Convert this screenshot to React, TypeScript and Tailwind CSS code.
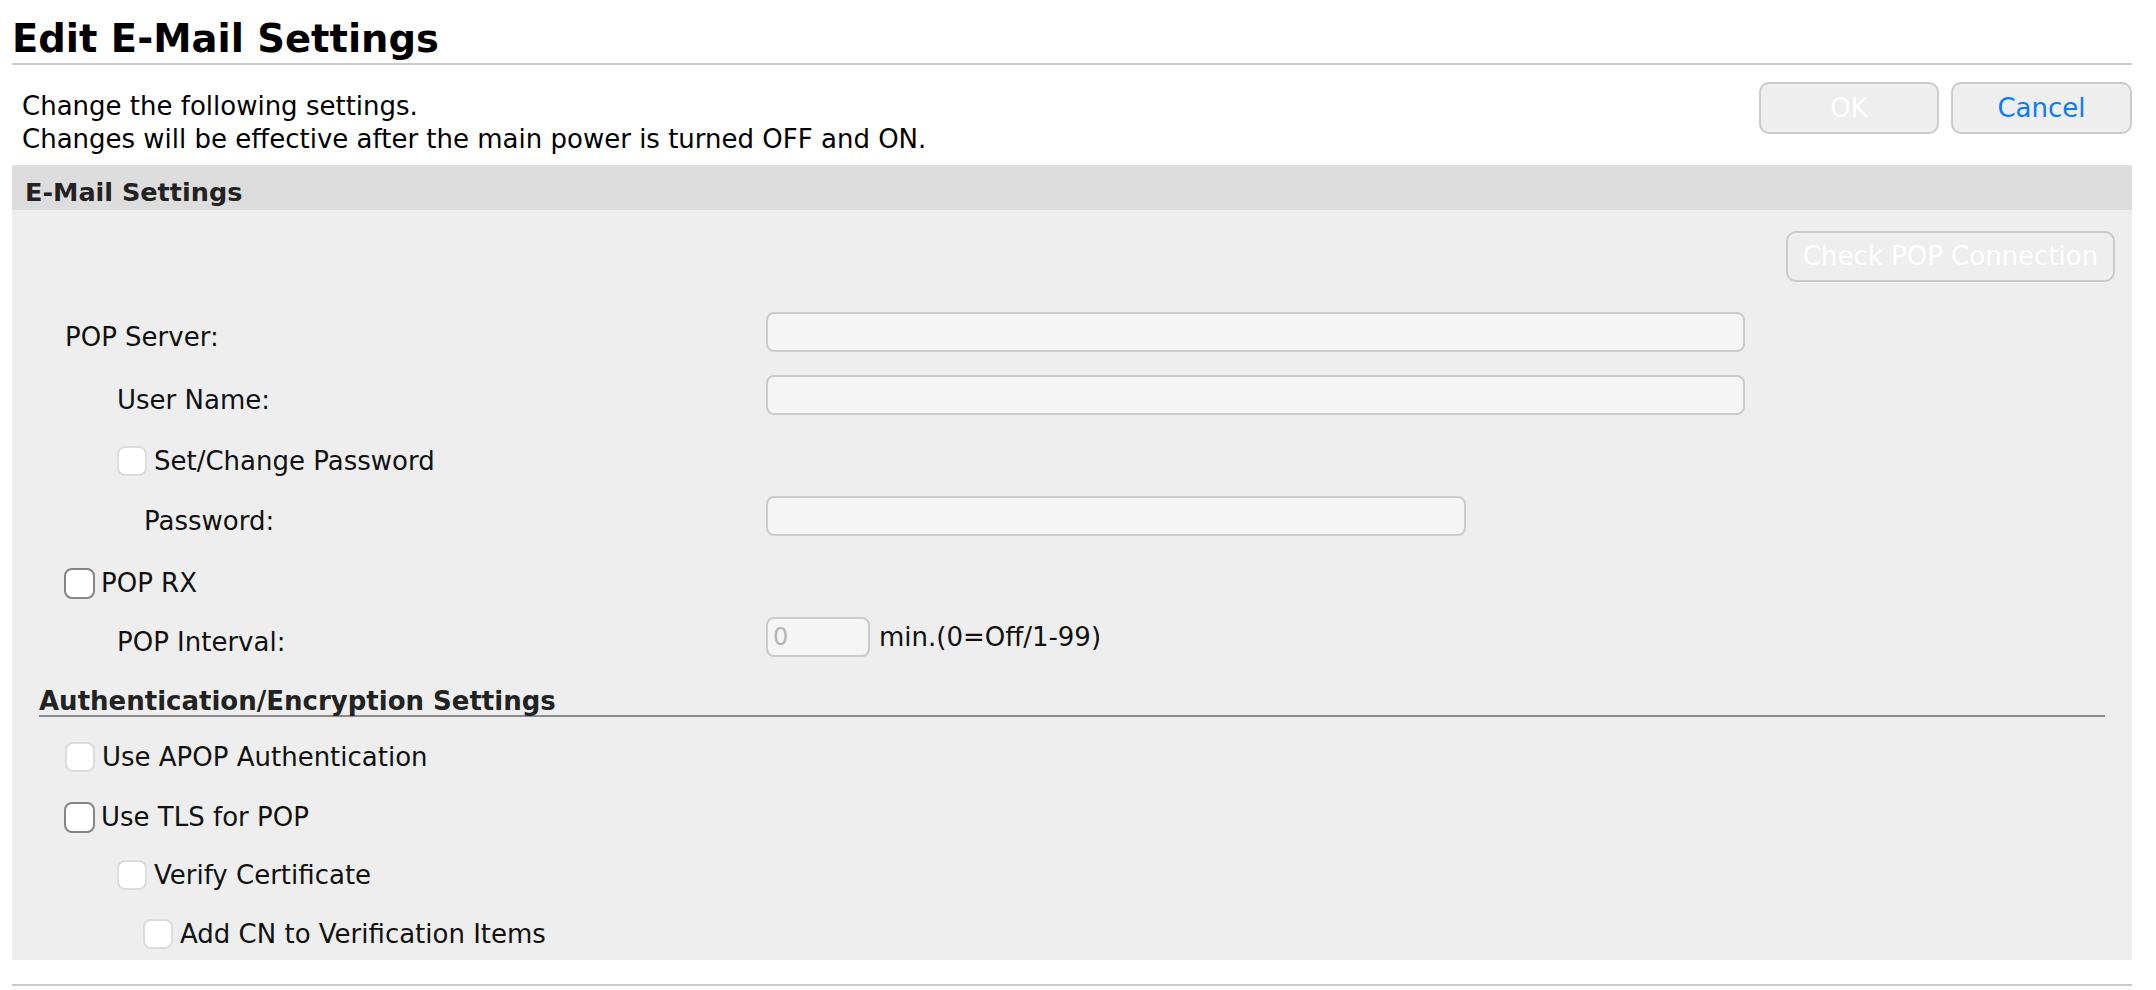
import React from "react";

function Box({ dark }: { dark?: boolean }) {
  return (
    <span
      className={
        dark
          ? "block w-[31px] h-[31px] shrink-0 rounded-[8px] border-2 border-[#858585] bg-white"
          : "block w-[30px] h-[30px] shrink-0 rounded-[8px] border-2 border-[#dcdcdc] bg-white"
      }
    />
  );
}

function CheckRow({ indent, dark, label, mt }: { indent: string; dark?: boolean; label: string; mt: string }) {
  return (
    <div className={`flex items-center h-[40px] ${mt} ${indent}`}>
      <Box dark={dark} />
      <span className={dark ? "ml-[6px]" : "ml-[7px]"}>{label}</span>
    </div>
  );
}

function FieldRow({
  label,
  labelPad,
  inputW,
  mt,
}: {
  label: string;
  labelPad: string;
  inputW: string;
  mt: string;
}) {
  return (
    <div className={`flex items-center h-[40px] ${mt}`}>
      <div className={`w-[754px] shrink-0 pt-[11px] ${labelPad}`}>{label}</div>
      <div className={`h-[40px] ${inputW} rounded-[8px] border-2 border-[#cbcbcb] bg-[#f5f5f5]`} />
    </div>
  );
}

export default function App() {
  return (
    <div className="w-[2156px] h-[990px] bg-white text-black font-['DejaVu_Sans',sans-serif] pl-[12px] pr-[24px] overflow-hidden">
      <h1 className="pt-[16px] h-[65px] text-[38.5px] leading-[46px] font-bold border-b-2 border-[#cccccc]">
        Edit E-Mail Settings
      </h1>

      <div className="mt-[17px] flex justify-between items-start h-[72px]">
        <div className="pt-[8px] pl-[10px] text-[26px] leading-[33px]">
          <div>Change the following settings.</div>
          <div>Changes will be effective after the main power is turned OFF and ON.</div>
        </div>
        <div className="flex gap-[12px]">
          <button className="w-[180px] h-[52px] rounded-[10px] border-2 border-[#cbcbcb] bg-[#eeeeee] text-white text-[26px]">
            OK
          </button>
          <button className="w-[181px] h-[52px] rounded-[10px] border-2 border-[#cbcbcb] bg-[#eeeeee] text-[#0a7bff] text-[26px]">
            Cancel
          </button>
        </div>
      </div>

      <div className="mt-[11px]">
        <div className="h-[45px] bg-[#dddddd] flex items-center pt-[9px] pl-[13px] text-[25.5px] font-bold text-[#222222]">
          E-Mail Settings
        </div>
        <div className="bg-[#eeeeee] h-[750px] text-[26px] text-[#111111]">
          <div className="flex justify-end pt-[21px] pr-[17px]">
            <button className="w-[329px] h-[51px] rounded-[10px] border-2 border-[#cbcbcb] bg-[#eeeeee] text-white text-[26px]">
              Check POP Connection
            </button>
          </div>

          <FieldRow label="POP Server:" labelPad="pl-[53px]" inputW="w-[979px]" mt="mt-[30px]" />
          <FieldRow label="User Name:" labelPad="pl-[105px]" inputW="w-[979px]" mt="mt-[23px]" />
          <CheckRow indent="pl-[105px]" label="Set/Change Password" mt="mt-[26px]" />
          <FieldRow label="Password:" labelPad="pl-[132px]" inputW="w-[700px]" mt="mt-[15px]" />
          <CheckRow indent="pl-[52px]" dark label="POP RX" mt="mt-[27px]" />
          <div className="flex items-center h-[40px] mt-[14px]">
            <div className="w-[754px] shrink-0 pl-[105px] pt-[11px]">POP Interval:</div>
            <div className="h-[40px] w-[104px] rounded-[8px] border-2 border-[#cbcbcb] bg-[#f5f5f5] flex items-center pl-[5px] text-[24px] text-[#b5b5b5]">
              0
            </div>
            <span className="ml-[9px]">min.(0=Off/1-99)</span>
          </div>

          <div className="mt-[25px] mx-[27px] h-[35px] pt-[5px] leading-[28px] border-b-2 border-[#8a8a8a] text-[26px] font-bold text-[#222222]">
            Authentication/Encryption Settings
          </div>

          <CheckRow indent="pl-[53px]" label="Use APOP Authentication" mt="mt-[20px]" />
          <CheckRow indent="pl-[52px]" dark label="Use TLS for POP" mt="mt-[20px]" />
          <CheckRow indent="pl-[105px]" label="Verify Certificate" mt="mt-[18px]" />
          <CheckRow indent="pl-[131px]" label="Add CN to Verification Items" mt="mt-[19px]" />
        </div>
        <div className="mt-[24px] border-b-2 border-[#cccccc]" />
      </div>
    </div>
  );
}
